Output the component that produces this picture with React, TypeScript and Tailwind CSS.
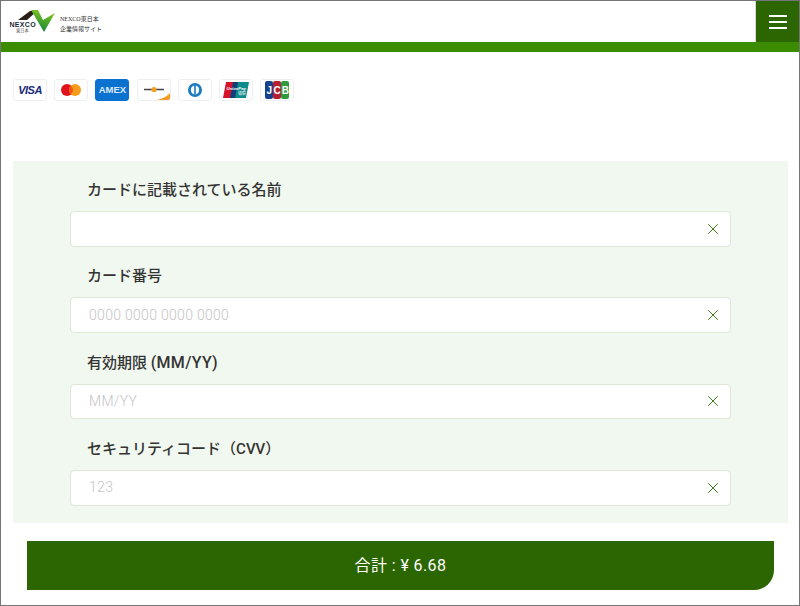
import { X } from 'lucide-react';

const jp = 'font-["Roboto","Noto_Sans_CJK_JP",sans-serif]';

function Logo() {
  return (
    <div className="flex items-start ml-[8px] mt-[5px]">
      <svg width="48" height="28" viewBox="0 0 48 28">
        <defs>
          <linearGradient id="vgrad" x1="0.7" y1="0" x2="0.4" y2="1">
            <stop offset="0" stopColor="#86c81e" />
            <stop offset="1" stopColor="#12853a" />
          </linearGradient>
        </defs>
        <path d="M9 14 L21 5 L28 5 L18 14 Z" fill="#2a2018" />
        <path d="M22 4 L29 4 L34 14 L46 7 L35 26 Z" fill="url(#vgrad)" />
        <text x="0.5" y="21" fontSize="7" fontWeight="700" letterSpacing="0.3" fill="#222a3a" fontFamily="Liberation Sans">NEXCO</text>
        <text x="7" y="25.5" fontSize="4.2" fill="#555" fontFamily="Noto Sans CJK JP">東日本</text>
      </svg>
      <div className="ml-[3px] mt-[9px] text-[6px] leading-[9.5px] text-[#333] font-['Liberation_Serif','Noto_Sans_CJK_JP',serif]">
        <div>NEXCO東日本</div>
        <div>企業情報サイト</div>
      </div>
    </div>
  );
}

function CardFrame({ children, className = 'bg-white border-[#eeeff3]' }: { children?: React.ReactNode; className?: string }) {
  return <div className={`w-[34px] h-[22px] rounded-[3px] border overflow-hidden flex items-center justify-center ${className}`}>{children}</div>;
}

function Cards() {
  return (
    <div className="flex gap-[7.2px] mt-[27px] ml-[12px]">
      <CardFrame>
        <span className="text-[11px] font-bold italic text-[#1a2a7a] font-['Liberation_Sans',sans-serif] tracking-[-0.5px]">VISA</span>
      </CardFrame>
      <CardFrame>
        <svg width="22" height="14" viewBox="0 0 22 14">
          <circle cx="7" cy="7" r="6" fill="#e2131c" />
          <circle cx="15" cy="7" r="6" fill="#f99c1c" />
          <path d="M11 2.5a6 6 0 0 1 0 9a6 6 0 0 1 0-9Z" fill="#f0591a" />
        </svg>
      </CardFrame>
      <CardFrame className="bg-[#0b72cf] border-[#0b72cf]">
        <span className="text-[9.5px] font-bold text-[#dbeafa] font-['Liberation_Sans',sans-serif] tracking-[-0.1px]">AMEX</span>
      </CardFrame>
      <CardFrame>
        <svg width="32" height="20" viewBox="0 0 32 20">
          <path d="M6 9.5h20" stroke="#444" strokeWidth="1.4" />
          <circle cx="16" cy="9.5" r="2.6" fill="#f39c1f" />
          <path d="M19 20 Q28 18 32 13 V20 Z" fill="#f39c1f" />
        </svg>
      </CardFrame>
      <CardFrame>
        <svg width="18" height="16" viewBox="0 0 18 16">
          <circle cx="9" cy="8" r="7" fill="#1b7cc4" />
          <path d="M8.2 3.6 A4.6 4.6 0 0 0 8.2 12.4 Z" fill="white" />
          <path d="M9.8 3.6 A4.6 4.6 0 0 1 9.8 12.4 Z" fill="white" />
        </svg>
      </CardFrame>
      <CardFrame>
        <svg width="26" height="16" viewBox="0 0 26 16">
          <path d="M3 0h10l-3 16H0Z" fill="#d6132b" />
          <path d="M10 0h7l-3 16H7Z" fill="#123f7a" />
          <path d="M15 0h11l-3 16H12Z" fill="#0f8a8a" />
          <text x="3.5" y="8" fontSize="4.2" fontStyle="italic" fontWeight="700" fill="white" fontFamily="Liberation Sans">UnionPay</text>
          <text x="15" y="13" fontSize="4" fill="white" fontFamily="Noto Sans CJK SC">银联</text>
        </svg>
      </CardFrame>
      <CardFrame>
        <svg width="24" height="18" viewBox="0 0 24 18">
          <rect x="0" y="0" width="8" height="18" rx="2" fill="#14428c" />
          <rect x="8" y="0" width="8" height="18" rx="2" fill="#b81f36" />
          <rect x="16" y="0" width="8" height="18" rx="2" fill="#2e9b3e" />
          <text x="1.5" y="13" fontSize="10" fontWeight="700" fill="white" fontFamily="Liberation Sans">J</text>
          <text x="8.6" y="13" fontSize="10" fontWeight="700" fill="white" fontFamily="Liberation Sans">C</text>
          <text x="16.8" y="13" fontSize="10" fontWeight="700" fill="white" fontFamily="Liberation Sans">B</text>
        </svg>
      </CardFrame>
    </div>
  );
}

function Field({ label, placeholder }: { label: React.ReactNode; placeholder: string }) {
  return (
    <div>
      <div className={`ml-[17px] mt-[1px] h-[20px] leading-[20px] text-[15px] font-medium text-[#333] ${jp}`}>{label}</div>
      <div className="mt-[11px] h-[35.6px] flex items-center justify-between bg-white border border-[#dde8d6] rounded-[4px] pl-[18px] pr-[8px]">
        <span className="text-[14px] font-light tracking-[0.3px] text-[#c4c4c4] font-['Roboto',sans-serif]">{placeholder}</span>
        <X size={18} strokeWidth={1.3} className="text-[#3a7a14]" />
      </div>
    </div>
  );
}

export default function App() {
  return (
    <div className="w-[800px] h-[606px] bg-white border border-[#757575] overflow-hidden flex flex-col">
      <header className="h-[41px] flex justify-between shrink-0">
        <Logo />
        <button className="w-[44px] bg-[#2b6600] flex flex-col items-center justify-center gap-[4px] border-l border-[#d8d8d8]">
          <span className="w-[18px] h-[2px] bg-white" />
          <span className="w-[18px] h-[2px] bg-white" />
          <span className="w-[18px] h-[2px] bg-white" />
        </button>
      </header>
      <div className="h-[10px] bg-[#3b8c00] shrink-0" />
      <Cards />
      <main className="mt-[60px] ml-[12px] w-[775px] h-[362px] bg-[#f1f8ef] px-[57px] pt-[18px] flex flex-col gap-[18.73px]">
        <Field label="カードに記載されている名前" placeholder="" />
        <Field label="カード番号" placeholder="0000 0000 0000 0000" />
        <Field label={<>有効期限 <span className="text-[16px] tracking-[0.3px]">(MM/YY)</span></>} placeholder="MM/YY" />
        <Field label="セキュリティコード（CVV）" placeholder="123" />
      </main>
      <button className={`mt-[18px] ml-[26px] w-[747px] h-[49px] bg-[#2b6600] text-white text-[16px] tracking-[0.4px] rounded-br-[20px] ${jp}`}>
        合計 : ¥ 6.68
      </button>
    </div>
  );
}
